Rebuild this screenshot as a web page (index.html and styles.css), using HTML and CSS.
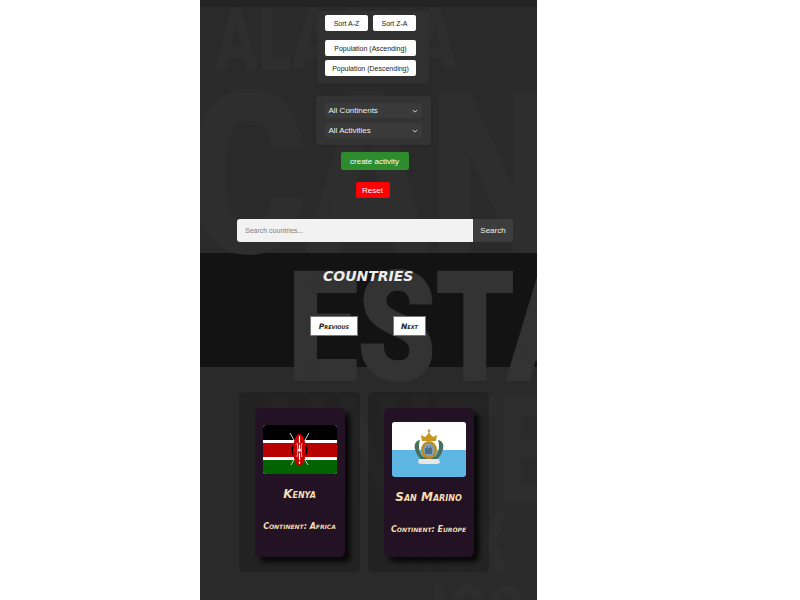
FILE: index.html
```html
<!DOCTYPE html>
<html lang="en">
  <head>
    <meta charset="UTF-8" />
    <meta name="viewport" content="width=device-width, initial-scale=1.0" />
    <title>Countries</title>
    <link rel="stylesheet" href="styles.css">
  </head>
  <body>
    <div class="page">
      <div class="bg-words" aria-hidden="true">
        <span class="word w-alaska">ALASKA</span>
        <span class="word w-canada">CANADA</span>
        <span class="word w-esta">ESTA</span>
        <span class="word w-united">UNITED</span>
        <span class="word w-mex">MEX</span>
        <span class="word w-ico">ICO</span>
      </div>

      <section class="controls">
        <div class="panel sort-panel">
          <div class="sort-row">
            <button class="btn-white btn-sort">Sort A-Z</button>
            <button class="btn-white btn-sort">Sort Z-A</button>
          </div>
          <button class="btn-white btn-pop first">Population (Ascending)</button>
          <button class="btn-white btn-pop">Population (Descending)</button>
        </div>

        <div class="panel filter-panel">
          <div class="fake-select">All Continents
            <svg class="chevron" viewBox="0 0 8 5"><path d="M1 1l3 3 3-3" fill="none" stroke="#ddd" stroke-width="1.2"/></svg>
          </div>
          <div class="fake-select">All Activities
            <svg class="chevron" viewBox="0 0 8 5"><path d="M1 1l3 3 3-3" fill="none" stroke="#ddd" stroke-width="1.2"/></svg>
          </div>
        </div>

        <button class="btn-create">create activity</button>
        <button class="btn-reset">Reset</button>

        <div class="search">
          <input class="search-input" type="text" placeholder="Search countries..." />
          <button class="search-btn">Search</button>
        </div>
      </section>

      <section class="title-band">
        <h1 class="title">Countries</h1>
        <div class="pager">
          <button class="btn-page btn-prev">Previous</button>
          <button class="btn-page btn-next">Next</button>
        </div>
      </section>

      <section class="cards">
        <div class="card-wrap">
          <article class="card">
            <svg class="flag" viewBox="0 0 74 49">
              <rect width="74" height="49" fill="#fff"/>
              <rect width="74" height="15" fill="#000"/>
              <rect y="18" width="74" height="14" fill="#b80000"/>
              <rect y="35" width="74" height="14" fill="#006300"/>
              <path d="M27 8l18 32M46 8L28 40" stroke="#ccc" stroke-width="1"/>
              <ellipse cx="36.500" cy="25" rx="8" ry="9" fill="#000"/>
              <ellipse cx="36.500" cy="25" rx="6.500" ry="16" fill="#c80000"/>
              <path d="M36.500 11v28" stroke="#fff" stroke-width="1.200" stroke-dasharray="7 1.500"/>
              <path d="M34 18c1 4 1 10 0 14M39 18c-1 4-1 10 0 14" fill="none" stroke="#fff" stroke-width=".7"/>
              <circle cx="36.500" cy="25" r="1.500" fill="#fff"/>
            </svg>
            <h2 class="card-name">Kenya</h2>
            <p class="card-info">Continent: Africa</p>
          </article>
        </div>
        <div class="card-wrap">
          <article class="card card-tall">
            <svg class="flag flag-tall" viewBox="0 0 74 55">
              <rect width="74" height="55" fill="#5eb6e4"/>
              <rect width="74" height="28" fill="#fff"/>
              <path d="M28 18c-5 1-6 5-5 9s3 9 9 12h10c6-3 8-8 9-12s0-8-5-9c2 6 1 13-3 17H31c-4-4-5-11-3-17z" fill="#47705a"/>
              <path d="M27 37h20l1 4-3 1H29l-3-1z" fill="#e6e6e6"/>
              <ellipse cx="37" cy="28" rx="8" ry="9" fill="#bd8a26"/>
              <ellipse cx="37" cy="28" rx="5.500" ry="6.500" fill="#7d9fbb"/>
              <path d="M33 32v-6h2v-2h1v2h2v-2h1v2h1v6z" fill="#4f6f86"/>
              <path d="M30 19l-1-6 4 2 4-4 4 4 4-2-1 6z" fill="#c8961e"/>
              <path d="M37 7v5M35.500 9h3" stroke="#b58a2a" stroke-width="1"/>
            </svg>
            <h2 class="card-name">San Marino</h2>
            <p class="card-info">Continent: Europe</p>
          </article>
        </div>
      </section>
    </div>
  </body>
</html>
```

FILE: styles.css
```css
* {
  box-sizing: border-box;
}

body {
  margin: 0;
  background-color: #ffffff;
  font-family: "Liberation Sans", Arial, sans-serif;
}

.page {
  position: relative;
  width: 337px;
  height: 600px;
  margin-left: 200px;
  overflow: hidden;
  background-color: #2a2a2a;
}

/* big letters behind everything */
.bg-words {
  position: absolute;
  inset: 0;
  pointer-events: none;
}

.word {
  position: absolute;
  font-family: Roboto, "Liberation Sans", sans-serif;
  font-weight: 900;
  line-height: 1;
  white-space: nowrap;
  color: #2e2e2e;
  transform-origin: left top;
}

.w-alaska {
  left: 15px;
  top: -4px;
  font-size: 88px;
  transform: scaleX(0.71);
}

.w-canada {
  left: -12px;
  top: 63px;
  font-size: 225px;
  -webkit-text-stroke: 2px #2e2e2e;
  transform: scaleX(0.8);
}

.w-esta {
  left: 88px;
  top: 252px;
  font-size: 152px;
  color: #333333;
  -webkit-text-stroke: 2px #333333;
  transform: scaleX(0.82);
}

.w-united {
  left: 65px;
  top: 377px;
  font-size: 150px;
  color: #2d2d2d;
  transform: scaleX(0.68);
}

.w-mex {
  left: 186px;
  top: 502px;
  font-size: 84px;
  color: #2d2d2d;
  transform: scaleX(0.7);
}

.w-ico {
  left: 230px;
  top: 574px;
  font-size: 84px;
  color: #2d2d2d;
  transform: scaleX(0.7);
}

.controls {
  height: 253px;
  padding-top: 11px;
  border-top: 7px solid #232323;
  display: flex;
  flex-direction: column;
  align-items: center;
}

.controls > * {
  position: relative;
  z-index: 1;
}

.panel {
  background-color: #333333;
  border-radius: 3px;
  box-shadow: 0 1px 3px rgba(0, 0, 0, 0.15);
}

.sort-panel {
  width: 112px;
  height: 73px;
  margin-left: 9px;
  margin-top: -7px;
  padding: 4px 8px;
  background-color: #303030;
}

.sort-row {
  display: flex;
  gap: 5px;
  margin-bottom: 9px;
}

.btn-white {
  display: block;
  height: 16px;
  padding: 0;
  border: none;
  border-radius: 2px;
  background-color: #ffffff;
  color: #222222;
  font-family: inherit;
  font-size: 7px;
}

.btn-sort {
  width: 43px;
}

.btn-pop {
  width: 91px;
  margin-bottom: 4px;
}

.filter-panel {
  width: 115px;
  height: 49px;
  margin-top: 12px;
  margin-left: 9px;
  padding: 7px 9px;
  display: flex;
  flex-direction: column;
  gap: 5px;
}

.fake-select {
  display: flex;
  justify-content: space-between;
  align-items: center;
  width: 97px;
  height: 15px;
  padding: 0 4px;
  background-color: #3a3a3a;
  border-radius: 2px;
  color: #eeeeee;
  font-size: 8px;
}

.chevron {
  width: 6px;
  height: 4px;
}

.btn-create {
  width: 68px;
  height: 18px;
  margin-top: 7px;
  margin-left: 12px;
  padding: 0;
  border: none;
  border-radius: 2px;
  background-color: #2e8b2e;
  color: #ffffff;
  font-family: inherit;
  font-size: 8px;
}

.btn-reset {
  width: 34px;
  height: 16px;
  margin-top: 12px;
  margin-left: 8px;
  padding: 0;
  border: none;
  border-radius: 2px;
  background-color: #ff0000;
  color: #ffffff;
  font-family: inherit;
  font-size: 8px;
}

.search {
  display: flex;
  width: 276px;
  height: 23px;
  margin-top: 21px;
  margin-left: 13px;
  border-radius: 3px;
  overflow: hidden;
}

.search-input {
  width: 236px;
  height: 23px;
  padding: 0 8px;
  border: none;
  background-color: #f2f2f2;
  font-family: inherit;
  font-size: 7px;
}

.search-input::placeholder {
  color: #808080;
}

.search-btn {
  width: 40px;
  padding: 0;
  border: none;
  background-color: #3d3d3d;
  color: #f0f0f0;
  font-family: inherit;
  font-size: 8px;
}

.title-band {
  height: 114px;
  padding-top: 15px;
  background-color: #131313;
}

.title {
  position: relative;
  z-index: 1;
  margin: 0;
  padding-left: 123px;
  color: #eeeeee;
  font-family: "DejaVu Sans", sans-serif;
  font-size: 14px;
  font-style: italic;
  font-weight: 700;
  text-transform: uppercase;
}

.pager {
  position: relative;
  z-index: 1;
  display: flex;
  gap: 35px;
  padding-top: 32px;
  padding-left: 110px;
}

.btn-page {
  height: 20px;
  padding: 0;
  border: 1px solid #777777;
  background-color: #ffffff;
  color: #222222;
  font-family: "DejaVu Sans", sans-serif;
  font-size: 7.500px;
  font-style: italic;
  font-weight: 700;
  font-variant: small-caps;
}

.btn-prev {
  width: 48px;
}

.btn-next {
  width: 33px;
}

.cards {
  position: relative;
  z-index: 1;
  display: flex;
  gap: 8px;
  padding-top: 25px;
  padding-left: 39px;
}

.card-wrap {
  width: 121px;
  height: 180px;
  display: flex;
  justify-content: center;
  padding-top: 16px;
  background-color: rgba(0, 0, 0, 0.18);
  border-radius: 5px;
}

.card {
  width: 90px;
  height: 149px;
  padding: 17px 8px 0;
  text-align: center;
  background-color: #231124;
  border-radius: 5px;
  box-shadow: 5px 5px 5px rgba(0, 0, 0, 0.8);
}

.card-tall {
  padding-top: 14px;
}

.flag {
  display: block;
  width: 74px;
  height: 49px;
  border-radius: 3px;
}

.flag-tall {
  height: 55px;
}

.card-name {
  margin: 13px 0 0;
  color: #f5deb3;
  font-family: "DejaVu Sans", sans-serif;
  font-size: 12px;
  font-style: italic;
  font-weight: 700;
  font-variant: small-caps;
  white-space: nowrap;
}

.card-info {
  margin: 21px -6px 0;
  color: #f5deb3;
  font-family: "DejaVu Sans", sans-serif;
  font-size: 8px;
  font-style: italic;
  font-weight: 700;
  font-variant: small-caps;
  white-space: nowrap;
}
```
